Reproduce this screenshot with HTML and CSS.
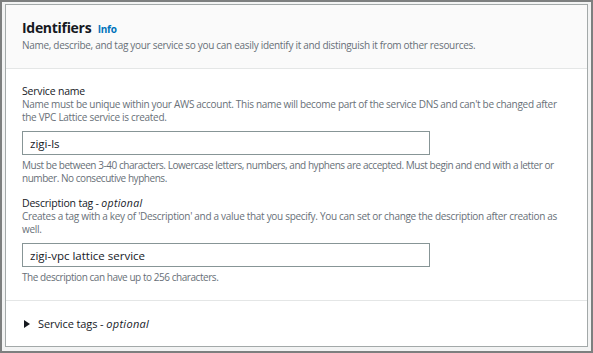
FILE: index.html
```html
<!DOCTYPE html>
<html lang="en">
<head>
  <meta charset="UTF-8" />
  <meta name="viewport" content="width=device-width, initial-scale=1.0" />
  <title>Identifiers</title>
  <link rel="stylesheet" href="styles.css">
</head>
<body>

<div class="frame">
  <section class="container">
    <!-- Header -->
    <header class="container-header">
      <h2>Identifiers <a class="info-link" href="#">Info</a></h2>
      <p class="header-desc">Name, describe, and tag your service so you can easily identify it and distinguish it from other resources.</p>
    </header>

    <!-- Fields -->
    <div class="container-body">
      <div class="field">
        <label for="serviceName">Service name</label>
        <p class="constraint">Name must be unique within your AWS account. This name will become part of the service DNS and can't be changed after the VPC Lattice service is created.</p>
        <input type="text" id="serviceName" value="zigi-ls" />
        <p class="hint">Must be between 3-40 characters. Lowercase letters, numbers, and hyphens are accepted. Must begin and end with a letter or number. No consecutive hyphens.</p>
      </div>

      <div class="field">
        <label for="descTag">Description tag - <i>optional</i></label>
        <p class="constraint">Creates a tag with a key of 'Description' and a value that you specify. You can set or change the description after creation as well.</p>
        <input type="text" id="descTag" value="zigi-vpc lattice service" />
        <p class="hint">The description can have up to 256 characters.</p>
      </div>
    </div>

    <!-- Expandable tags -->
    <div class="expandable">
      <span class="caret"></span>
      <span>Service tags - <i>optional</i></span>
    </div>
  </section>
</div>

</body>
</html>
```
FILE: styles.css
```css
/* General Styling */
html,
body {
  margin: 0;
  padding: 0;
}

body {
  font-family: 'Open Sans', sans-serif;
  color: #16191f;
  background-color: #f2f3f3;
}

/* Outer frame of the screenshot */
.frame {
  box-sizing: border-box;
  width: 593px;
  height: 353px;
  border: 2px solid #7d7f7f;
  padding: 2px 3px 4px 3px;
  background-color: #f2f3f3;
  display: flex;
  flex-direction: column;
}

/* Card */
.container {
  flex: 1;
  background-color: #ffffff;
  border: 1px solid #a3a9a9;
  display: flex;
  flex-direction: column;
}

.container-header {
  background-color: #fafafa;
  border-bottom: 1px solid #e4e6e6;
  padding: 13px 16px 16px;
}

h2 {
  margin: 0;
  font-size: 14px;
  line-height: 20px;
  font-weight: 700;
  letter-spacing: -0.3px;
  color: #16191f;
}

.info-link {
  margin-left: 3px;
  font-size: 10px;
  font-weight: 700;
  letter-spacing: -0.2px;
  color: #0073bb;
  text-decoration: none;
}

.header-desc {
  margin: 0;
  font-size: 10px;
  line-height: 13px;
  letter-spacing: -0.3px;
  color: #687078;
}

/* Fields */
.container-body {
  padding: 15px 16px 16px;
  display: flex;
  flex-direction: column;
  gap: 11px;
}

label {
  display: block;
  font-size: 10.5px;
  line-height: 14px;
  letter-spacing: -0.2px;
  color: #16191f;
}

label i,
.expandable i {
  letter-spacing: 0.3px;
}

.constraint,
.hint {
  margin: 0;
  font-size: 10px;
  line-height: 13px;
  letter-spacing: -0.3px;
  color: #687078;
}

.hint {
  letter-spacing: -0.45px;
}

input[type="text"] {
  box-sizing: border-box;
  display: block;
  width: 408px;
  height: 24px;
  margin: 7px 0 4px;
  padding: 0 7px;
  border: 1px solid #879596;
  border-radius: 0;
  font-family: inherit;
  font-size: 11.5px;
  color: #16191f;
  background-color: #ffffff;
}

/* Expandable section */
.expandable {
  border-top: 1px solid #e4e6e6;
  padding: 15px 18px;
  display: flex;
  align-items: center;
  gap: 8px;
  font-size: 11px;
  line-height: 15px;
  letter-spacing: -0.1px;
  color: #16191f;
}

.caret {
  width: 0;
  height: 0;
  border-top: 4px solid transparent;
  border-bottom: 4px solid transparent;
  border-left: 6px solid #16191f;
}
```
